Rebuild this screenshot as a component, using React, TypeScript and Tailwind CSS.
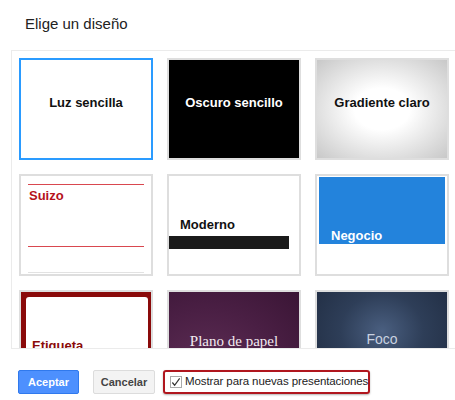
import React from 'react';

function Card({ selected, className, children }: { selected?: boolean; className?: string; children?: React.ReactNode }) {
  return (
    <div
      className={
        'relative h-[102px] w-[134px] overflow-hidden ' +
        (selected ? 'border-2 border-[#2a9bff] ' : 'border-2 border-[#dedede] ') +
        (className || '')
      }
    >
      {children}
    </div>
  );
}

export default function App() {
  return (
    <div className="h-[400px] w-[455px] overflow-hidden bg-white font-['Liberation_Sans',Arial,sans-serif]">
      <div className="pl-[25px] pt-[15px] text-[15px] leading-[18px] text-[#222]">Elige un diseño</div>

      <div className="ml-[11px] mt-[17px] h-[299px] overflow-hidden border-b border-l border-t border-[#ebebeb] pl-[7px] pt-[7px]">
        <div className="grid grid-cols-[134px_134px_134px] gap-x-[14px] gap-y-[14px]">
          <Card selected className="flex items-center justify-center bg-white pb-[12px]">
            <span className="text-[13px] font-bold text-[#111]">Luz sencilla</span>
          </Card>
          <Card className="flex items-center justify-center bg-black pb-[12px]">
            <span className="text-[13px] font-bold text-white">Oscuro sencillo</span>
          </Card>
          <Card className="flex items-center justify-center bg-[radial-gradient(ellipse_at_center,#ffffff_30%,#c8c8c8_100%)] pb-[12px]">
            <span className="text-[13px] font-bold text-[#111]">Gradiente claro</span>
          </Card>

          <Card className="bg-white">
            <div className="mx-[7px] mt-[8px] h-[1px] bg-[#d9474f]" />
            <div className="ml-[8px] mt-[2px] text-[13px] font-bold leading-[18px] text-[#b5121b]">Suizo</div>
            <div className="mx-[7px] mt-[41px] h-[1px] bg-[#d9474f]" />
            <div className="mx-[7px] mt-[25px] h-[1px] bg-[#e2e2e2]" />
          </Card>
          <Card className="bg-white">
            <div className="ml-[11px] mt-[41px] text-[13px] font-bold leading-[16px] text-[#111]">Moderno</div>
            <div className="mr-[10px] mt-[3px] h-[13px] bg-[#1a1a1a]" />
          </Card>
          <Card className="bg-white">
            <div className="mx-[2px] mt-[1px] flex h-[67px] items-end bg-[#2383dc] pl-[12px]">
              <span className="text-[13px] font-bold leading-[17px] text-white">Negocio</span>
            </div>
          </Card>

          <Card className="bg-[#8a0a0a]">
            <div className="ml-[5px] mr-[3px] mt-[5px] h-[100px] rounded-[3px] bg-white pl-[6px] pt-[36px]">
              <span className="text-[13px] font-bold leading-[16px] text-[#8a0a0a]">Etiqueta</span>
            </div>
          </Card>
          <Card className="bg-[radial-gradient(ellipse_at_30%_80%,#5e2e55_0%,#4a1f44_55%,#3a1535_100%)]">
            <div className="mt-[39px] text-center font-['Liberation_Serif',serif] text-[15px] leading-[20px] text-[#f2eaf0]">Plano de papel</div>
          </Card>
          <Card className="bg-[radial-gradient(ellipse_at_50%_40%,#4a5f80_0%,#2e3e58_45%,#1f2b40_100%)]">
            <div className="mt-[38px] text-center text-[14px] leading-[18px] text-[#c9d2e0]">Foco</div>
          </Card>
        </div>
      </div>

      <div className="ml-[18px] mt-[21px] flex items-center">
        <button className="h-[24px] w-[61px] rounded-[2px] border border-[#3079ed] bg-[#4d90fe] text-[11px] font-bold text-white">
          Aceptar
        </button>
        <button className="ml-[14px] h-[24px] w-[62px] rounded-[2px] border border-[#dcdcdc] bg-[#f3f3f3] text-[11px] font-bold text-[#444]">
          Cancelar
        </button>
        <div className="ml-[8px] flex h-[24px] w-[207px] items-center whitespace-nowrap rounded-[3px] border-2 border-[#b0161e] pl-[5px] shadow-[0_1px_2px_rgba(0,0,0,0.3)]">
          <span className="flex h-[12px] w-[12px] items-center justify-center border border-[#aaa] bg-white">
            <svg width="11" height="11" viewBox="0 0 11 11">
              <path d="M1.5 5.5 L4 8.5 L9.5 1" fill="none" stroke="#333" strokeWidth="1.3" />
            </svg>
          </span>
          <span className="ml-[3px] text-[11.5px] tracking-[-0.1px] text-[#222]">Mostrar para nuevas presentaciones</span>
        </div>
      </div>
    </div>
  );
}
